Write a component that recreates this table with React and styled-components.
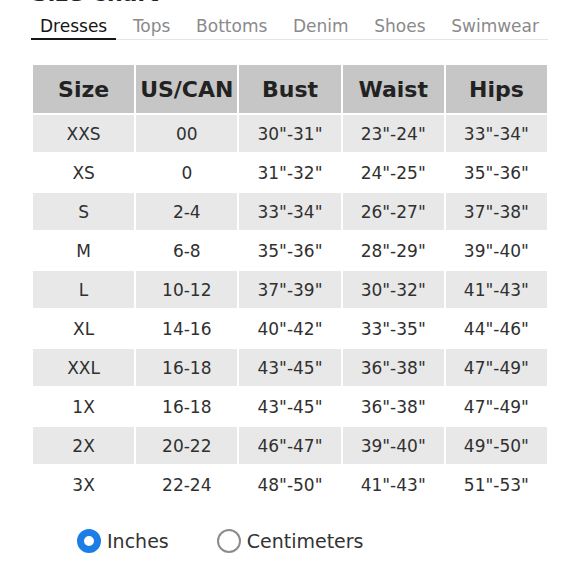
import React, { useState } from "react";
import styled, { createGlobalStyle } from "styled-components";

const Global = createGlobalStyle`
  html, body { margin: 0; padding: 0; background: #fff; }
  body { font-family: "DejaVu Sans", "Liberation Sans", sans-serif; overflow: hidden; }
`;

const Page = styled.div`
  width: 580px;
  height: 580px;
  padding-left: 31px;
  box-sizing: border-box;
  overflow: hidden;
`;

const Title = styled.h1`
  margin: -17px 0 0 1px;
  font-size: 22px;
  line-height: 22px;
  font-weight: 600;
  color: #222;
`;

const Tabs = styled.div`
  display: flex;
  justify-content: space-between;
  width: 517px;
  margin-top: 3px;
  border-bottom: 1px solid #e4e4e4;
`;

const Tab = styled.div`
  padding: 0 9px;
  height: 32px;
  line-height: 37px;
  font-size: 17px;
  color: ${(p) => (p.$active ? "#161616" : "#8a8a8a")};
  border-bottom: 2px solid ${(p) => (p.$active ? "#161616" : "transparent")};
  margin-bottom: -1px;
  box-sizing: border-box;
`;

const Grid = styled.div`
  display: grid;
  grid-template-columns: repeat(5, 1fr);
  grid-auto-rows: 37px;
  grid-template-rows: 48px;
  gap: 2px;
  width: 514px;
  margin: 25px 0 0 2px;
`;

const HeadCell = styled.div`
  background: #c6c6c6;
  display: flex;
  align-items: center;
  justify-content: center;
  font-size: 22px;
  font-weight: bold;
  color: #222;
  white-space: nowrap;
  overflow: visible;
`;

const Cell = styled.div`
  background: ${(p) => (p.$shade ? "#e8e8e8" : "#fff")};
  display: flex;
  align-items: center;
  justify-content: center;
  font-size: 17px;
  color: #303030;
  white-space: nowrap;
`;

const Units = styled.div`
  display: flex;
  align-items: center;
  margin: 26px 0 0 46px;
`;

const Option = styled.label`
  display: flex;
  align-items: center;
  gap: 6px;
  font-size: 19px;
  color: #333;
  margin-right: ${(p) => p.$mr || 0}px;
  cursor: pointer;
`;

const Radio = styled.span`
  width: 24px;
  height: 24px;
  border-radius: 50%;
  box-sizing: border-box;
  border: ${(p) => (p.$on ? "7px solid #1b7ee6" : "2px solid #8c8c8c")};
  background: #fff;
  flex-shrink: 0;
`;

const tabs = ["Dresses", "Tops", "Bottoms", "Denim", "Shoes", "Swimwear"];
const head = ["Size", "US/CAN", "Bust", "Waist", "Hips"];
const rows = [
  ["XXS", "00", '30"-31"', '23"-24"', '33"-34"'],
  ["XS", "0", '31"-32"', '24"-25"', '35"-36"'],
  ["S", "2-4", '33"-34"', '26"-27"', '37"-38"'],
  ["M", "6-8", '35"-36"', '28"-29"', '39"-40"'],
  ["L", "10-12", '37"-39"', '30"-32"', '41"-43"'],
  ["XL", "14-16", '40"-42"', '33"-35"', '44"-46"'],
  ["XXL", "16-18", '43"-45"', '36"-38"', '47"-49"'],
  ["1X", "16-18", '43"-45"', '36"-38"', '47"-49"'],
  ["2X", "20-22", '46"-47"', '39"-40"', '49"-50"'],
  ["3X", "22-24", '48"-50"', '41"-43"', '51"-53"'],
];

export default function App() {
  const [unit, setUnit] = useState("in");
  return (
    <Page>
      <Global />
      <Title>Size Chart</Title>
      <Tabs>
        {tabs.map((t, i) => (
          <Tab key={t} $active={i === 0}>
            {t}
          </Tab>
        ))}
      </Tabs>
      <Grid>
        {head.map((h) => (
          <HeadCell key={h}>{h}</HeadCell>
        ))}
        {rows.map((r, ri) =>
          r.map((c, ci) => (
            <Cell key={ri + "-" + ci} $shade={ri % 2 === 0}>
              {c}
            </Cell>
          ))
        )}
      </Grid>
      <Units>
        <Option $mr={48} onClick={() => setUnit("in")}>
          <Radio $on={unit === "in"} />
          Inches
        </Option>
        <Option onClick={() => setUnit("cm")}>
          <Radio $on={unit === "cm"} />
          Centimeters
        </Option>
      </Units>
    </Page>
  );
}
